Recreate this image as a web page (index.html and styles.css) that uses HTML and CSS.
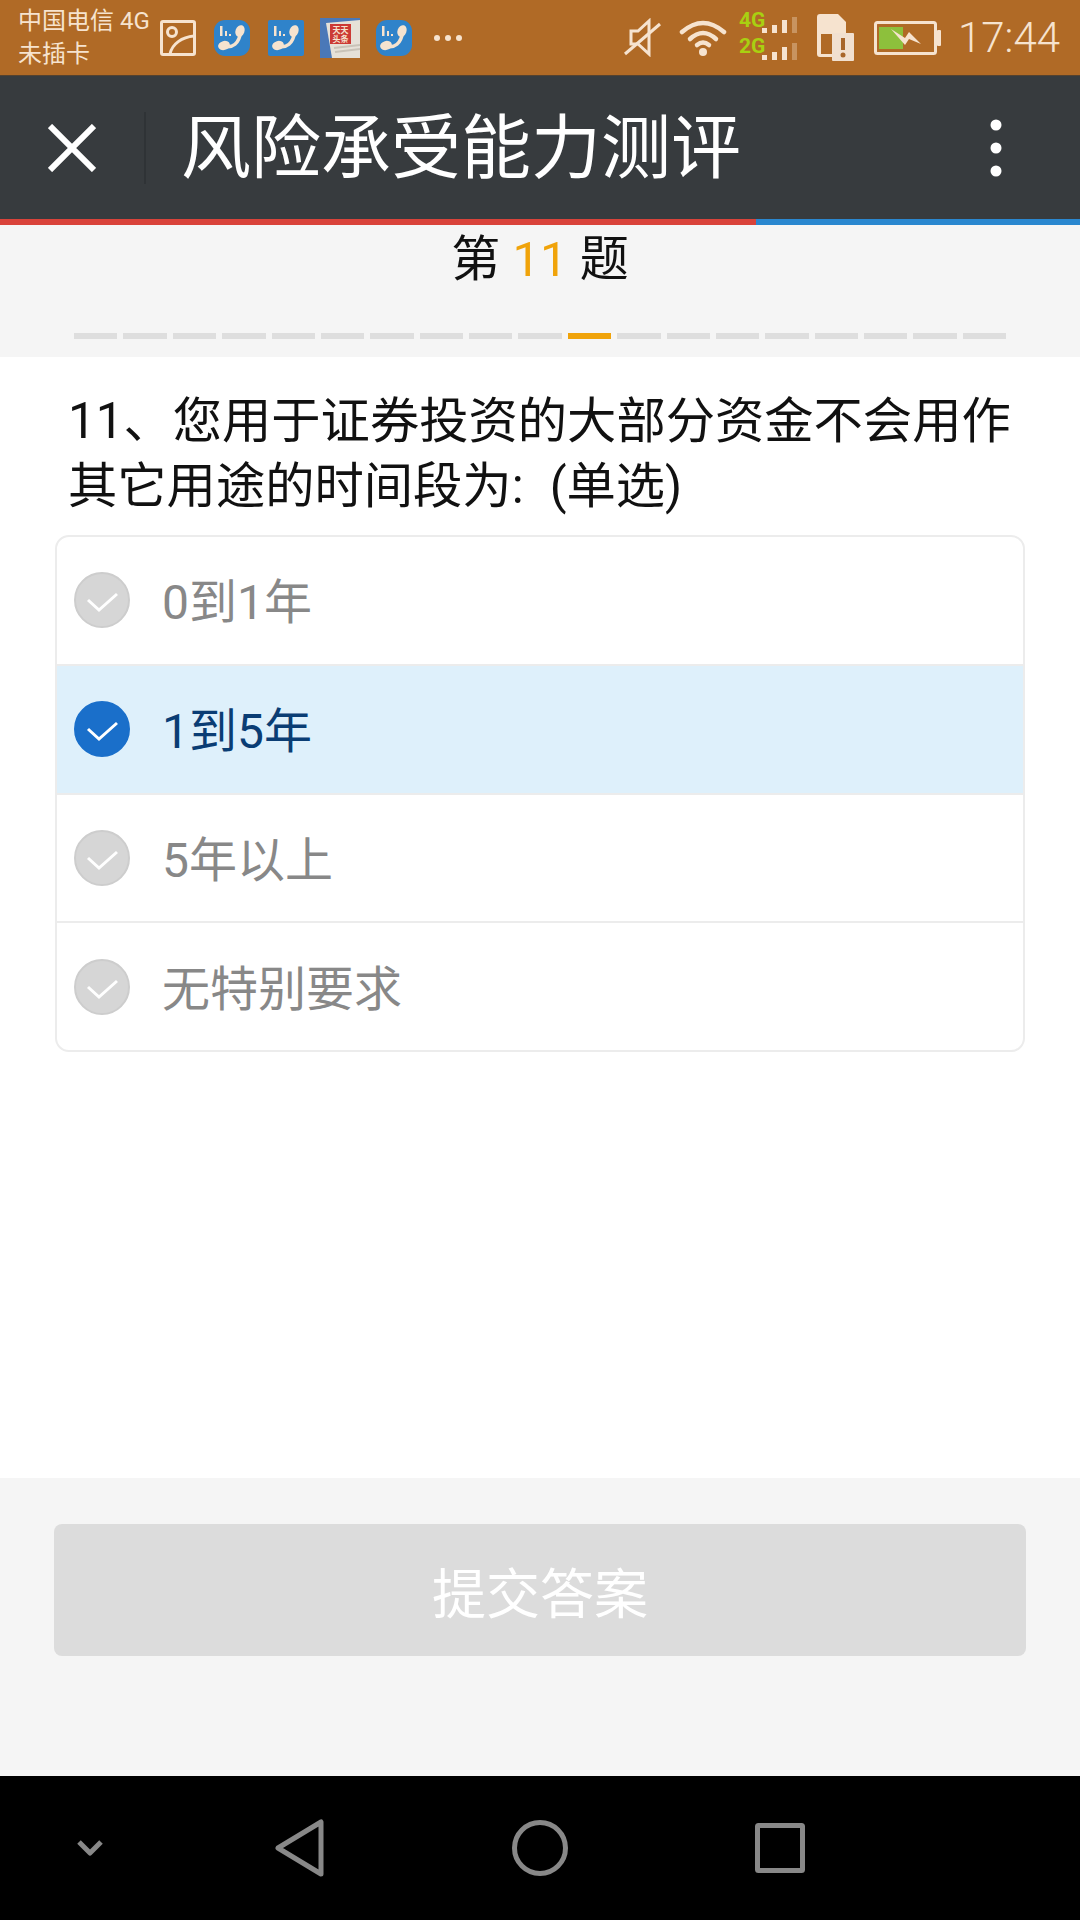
FILE: index.html
```html
<!DOCTYPE html>
<html lang="zh-CN">
<head>
  <meta charset="UTF-8" />
  <meta name="viewport" content="width=device-width, initial-scale=1" />
  <title>风险承受能力测评</title>
  <link rel="stylesheet" href="styles.css">
</head>
<body>
  <svg class="defs" width="0" height="0">
    <symbol id="handset" viewBox="0 0 36 36">
      <path fill="none" stroke="#f6e3cf" stroke-width="3.5" d="M9 26Q24 30 27 11"/>
      <ellipse cx="26" cy="11" rx="4.5" ry="6" transform="rotate(20 26 11)" fill="#f6e3cf"/>
      <ellipse cx="10" cy="25.5" rx="6" ry="4.5" transform="rotate(-15 10 25.5)" fill="#f6e3cf"/>
      <rect x="6" y="6" width="2.5" height="10" fill="#f6e3cf"/>
      <rect x="11" y="11" width="2" height="5" fill="#f6e3cf"/>
      <rect x="15" y="14" width="2" height="2" fill="#f6e3cf"/>
    </symbol>
  </svg>

  <div class="statusbar">
    <div class="carrier">
      <div>中国电信 4G</div>
      <div>未插卡</div>
    </div>
    <div class="notify">
      <svg width="36" height="36" viewBox="0 0 36 36" fill="none" stroke="#f6e3cf" stroke-width="3">
        <rect x="1.5" y="1.5" width="33" height="33" rx="1.5"/>
        <circle cx="12" cy="12" r="4.5"/>
        <path d="M10 34c2-10 12-17 24-18"/>
      </svg>
      <svg width="36" height="36" viewBox="0 0 36 36">
        <rect width="36" height="36" rx="11" fill="#2f83ca"/>
        <use href="#handset"/>
      </svg>
      <svg width="36" height="36" viewBox="0 0 36 36">
        <rect width="36" height="36" rx="2" fill="#2f83ca"/>
        <use href="#handset"/>
      </svg>
      <svg class="news" width="40" height="40" viewBox="0 0 40 40">
        <rect width="40" height="40" fill="#4a78b8"/>
        <path d="M6 5l34-3v38H12z" fill="#e6e1d8"/>
        <path d="M14 30l26-3M15 34l25-3" stroke="#c9c3b8" stroke-width="2"/>
        <rect x="10" y="6" width="21" height="20" fill="#cc3a35"/>
        <text class="news-mark" x="20.5" y="15">天天</text>
        <text class="news-mark" x="20.5" y="24">头条</text>
      </svg>
      <svg width="36" height="36" viewBox="0 0 36 36">
        <rect width="36" height="36" rx="11" fill="#2f83ca"/>
        <use href="#handset"/>
      </svg>
      <svg class="more" width="30" height="8" viewBox="0 0 30 8" fill="#f6e3cf">
        <circle cx="4" cy="4" r="3"/>
        <circle cx="15" cy="4" r="3"/>
        <circle cx="26" cy="4" r="3"/>
      </svg>
    </div>
    <div class="system">
      <svg class="mute" width="37" height="39" viewBox="0 0 37 39" fill="none" stroke="#f6e3cf" stroke-width="3">
        <path d="M7 13h7L25 3v33L14 26H7z"/>
        <path d="M1 36L36 6"/>
      </svg>
      <svg class="wifi" width="48" height="37" viewBox="0 0 48 37" fill="none" stroke="#f6e3cf" stroke-width="4.5" stroke-linecap="round">
        <path d="M3 13Q24-5 45 13"/>
        <path d="M11 20Q24 8 37 20"/>
        <path d="M18 26Q24 21 30 26"/>
        <circle cx="24" cy="33" r="4" fill="#f6e3cf" stroke="none"/>
      </svg>
      <svg class="signal" width="58" height="54" viewBox="0 -4 58 54" fill="#f6e3cf">
        <text class="net" x="0" y="17">4G</text>
        <text class="net" x="0" y="43">2G</text>
        <rect x="23" y="18" width="5" height="5"/>
        <rect x="33" y="15" width="5" height="8"/>
        <rect x="43" y="10" width="5" height="13"/>
        <rect x="53" y="7" width="5" height="16" opacity="0.35"/>
        <rect x="23" y="45" width="5" height="5"/>
        <rect x="33" y="42" width="5" height="8"/>
        <rect x="43" y="37" width="5" height="13"/>
        <rect x="53" y="33" width="5" height="17" opacity="0.35"/>
      </svg>
      <svg class="sim" width="37" height="47" viewBox="0 0 37 47">
        <path d="M3 0h18l8 8v12H4v20h12v3H3a3 3 0 0 1-3-3V3a3 3 0 0 1 3-3z" fill="#f6e3cf"/>
        <rect x="15" y="19" width="22" height="28" rx="1" fill="#f1e0d0"/>
        <rect x="24" y="24" width="4" height="12" fill="#a8662a"/>
        <circle cx="26" cy="41" r="2.5" fill="#a8662a"/>
      </svg>
      <svg class="battery" width="67" height="34" viewBox="0 0 67 34">
        <rect x="1.5" y="1.5" width="60" height="31" rx="2" fill="none" stroke="#f6e3cf" stroke-width="3"/>
        <rect x="63" y="9" width="4" height="16" rx="1" fill="#f6e3cf"/>
        <rect x="5" y="6" width="24" height="22" fill="#8dc03c"/>
        <path d="M17 8l14 9 4-6 12 12-12-5-4 6z" fill="#f6e3cf"/>
      </svg>
      <div class="clock">17:44</div>
    </div>
  </div>

  <div class="titlebar">
    <svg class="close" width="48" height="48" viewBox="0 0 48 48" stroke="#fff" stroke-width="6">
      <path d="M2 2l44 44M46 2L2 46"/>
    </svg>
    <div class="divider"></div>
    <div class="title">风险承受能力测评</div>
    <svg class="menu" width="12" height="58" viewBox="0 0 12 58" fill="#fff">
      <circle cx="6" cy="6" r="5.5"/>
      <circle cx="6" cy="29" r="5.5"/>
      <circle cx="6" cy="52" r="5.5"/>
    </svg>
  </div>
  <div class="accent">
    <div class="accent-red"></div>
    <div class="accent-blue"></div>
  </div>

  <div class="progress">
    <div class="progress-label">第 <span class="current">11</span> 题</div>
    <div class="steps">
      <i></i><i></i><i></i><i></i><i></i><i></i><i></i><i></i><i></i><i></i>
      <i class="on"></i>
      <i></i><i></i><i></i><i></i><i></i><i></i><i></i><i></i>
    </div>
  </div>

  <div class="content">
    <div class="question">
      <div>11、您用于证券投资的大部分资金不会用作</div>
      <div class="question-end"><span>其它用途的时间段为:</span><span>(单选)</span></div>
    </div>
    <div class="options">
      <div class="option">
        <svg class="tick" width="56" height="56" viewBox="0 0 56 56"><circle cx="28" cy="28" r="27"/><path d="M14 28l11 10 18-16"/></svg>
        <span>0到1年</span>
      </div>
      <div class="option selected">
        <svg class="tick" width="56" height="56" viewBox="0 0 56 56"><circle cx="28" cy="28" r="27"/><path d="M14 28l11 10 18-16"/></svg>
        <span>1到5年</span>
      </div>
      <div class="option">
        <svg class="tick" width="56" height="56" viewBox="0 0 56 56"><circle cx="28" cy="28" r="27"/><path d="M14 28l11 10 18-16"/></svg>
        <span>5年以上</span>
      </div>
      <div class="option">
        <svg class="tick" width="56" height="56" viewBox="0 0 56 56"><circle cx="28" cy="28" r="27"/><path d="M14 28l11 10 18-16"/></svg>
        <span>无特别要求</span>
      </div>
    </div>
  </div>

  <div class="footer">
    <button class="submit" disabled>提交答案</button>
  </div>

  <div class="navbar">
    <svg width="28" height="18" viewBox="0 0 28 18" fill="none" stroke="#888" stroke-width="5" stroke-linejoin="round">
      <path d="M3 3l11 11L25 3"/>
    </svg>
    <svg width="50" height="58" viewBox="0 0 50 58" fill="none" stroke="#888" stroke-width="5" stroke-linejoin="round">
      <path d="M46 3v52L3 29z"/>
    </svg>
    <svg width="56" height="56" viewBox="0 0 56 56" fill="none" stroke="#888" stroke-width="5">
      <circle cx="28" cy="28" r="25.5"/>
    </svg>
    <svg width="50" height="50" viewBox="0 0 50 50" fill="none" stroke="#888" stroke-width="5" stroke-linejoin="round">
      <rect x="2.5" y="2.5" width="45" height="45" rx="1"/>
    </svg>
  </div>
</body>
</html>
```

FILE: styles.css
```css
* {
  box-sizing: border-box;
}
body {
  margin: 0;
  height: 100vh;
  display: flex;
  flex-direction: column;
  background: #fff;
  font-family: Roboto, "Noto Sans CJK SC", sans-serif;
}
.defs {
  display: none;
}
svg {
  display: block;
  flex: none;
}

/* status bar */
.statusbar {
  height: 75px;
  flex: none;
  display: flex;
  align-items: center;
  padding: 0 20px 0 18px;
  background: #b06a26;
  color: #f6e3cf;
}
.carrier {
  width: 142px;
  font-size: 24px;
  line-height: 33px;
  white-space: nowrap;
}
.notify {
  display: flex;
  align-items: center;
  gap: 18px;
}
.news {
  margin: 0 -2px;
}
.news-mark {
  font-family: "Noto Sans CJK SC", sans-serif;
  font-size: 8px;
  font-weight: 700;
  fill: #f6e3cf;
  text-anchor: middle;
}
.more {
  margin-left: 3px;
}
.system {
  margin-left: auto;
  display: flex;
  align-items: center;
}
.mute {
  margin-right: 18px;
}
.wifi {
  margin-right: 12px;
}
.signal {
  margin: 0 20px 9px 0;
}
.sim {
  margin-right: 20px;
}
.battery {
  margin-right: 17px;
}
.net {
  font-size: 21px;
  font-weight: 700;
  fill: #a9d011;
}
.clock {
  font-size: 42px;
  font-weight: 300;
  line-height: 1;
}

/* title bar */
.titlebar {
  height: 144px;
  flex: none;
  display: flex;
  align-items: center;
  padding: 0 78px 0 48px;
  background: #373b3e;
  border-top: 1px solid #54422f;
}
.close {
  margin-right: 48px;
}
.divider {
  width: 2px;
  height: 72px;
  margin-right: 35px;
  background: #2f3336;
}
.title {
  flex: 1;
  margin-top: 3px;
  font-size: 70px;
  line-height: 1;
  color: #fff;
  white-space: nowrap;
}
.accent {
  height: 6px;
  flex: none;
  display: flex;
}
.accent-red {
  width: 756px;
  background: #d9433a;
}
.accent-blue {
  flex: 1;
  background: #2a87cf;
}

/* question counter */
.progress {
  flex: none;
  height: 132px;
  padding: 10px 74px 0 74px;
  background: #f5f5f5;
}
.progress-label {
  text-align: center;
  font-size: 49px;
  line-height: 50px;
  color: #111;
}
.current {
  color: #f0a30a;
}
.steps {
  display: flex;
  gap: 6px;
  margin-top: 48px;
}
.steps i {
  flex: 1;
  height: 6px;
  background: #dedede;
}
.steps i.on {
  background: #f0a30a;
}

/* question and answers */
.content {
  flex: 1;
  padding: 32px 55px 0;
}
.question {
  padding: 0 0 0 13px;
  font-size: 49.3px;
  line-height: 65px;
  color: #111;
}
.question-end {
  display: flex;
  gap: 26px;
}
.options {
  height: 517px;
  margin-top: 16px;
  display: flex;
  flex-direction: column;
  border: 2px solid #ececec;
  border-radius: 14px;
  overflow: hidden;
}
.option {
  flex: 1;
  display: flex;
  align-items: center;
  padding-left: 17px;
  font-size: 48px;
  color: #888;
}
.option + .option {
  border-top: 2px solid #ececec;
}
.option span {
  margin: 0 0 4px 32px;
}
.option.selected {
  background: #def0fb;
  color: #0a3d74;
}
.tick circle {
  fill: #d6d6d6;
  stroke: #cdcdcd;
  stroke-width: 2;
}
.tick path {
  fill: none;
  stroke: #fff;
  stroke-width: 3;
}
.selected .tick circle {
  fill: #1a6fca;
  stroke: #1a6fca;
}

/* submit */
.footer {
  height: 298px;
  flex: none;
  padding: 46px 54px 0;
  background: #f5f5f5;
}
.submit {
  display: block;
  width: 100%;
  height: 132px;
  border: none;
  border-radius: 8px;
  background: #dcdcdc;
  color: #fff;
  font-family: Roboto, "Noto Sans CJK SC", sans-serif;
  font-size: 54px;
}

/* android keys */
.navbar {
  height: 144px;
  flex: none;
  display: grid;
  grid-template-columns: 180px 240px 240px 240px;
  justify-items: center;
  align-items: center;
  background: #000;
}
```
